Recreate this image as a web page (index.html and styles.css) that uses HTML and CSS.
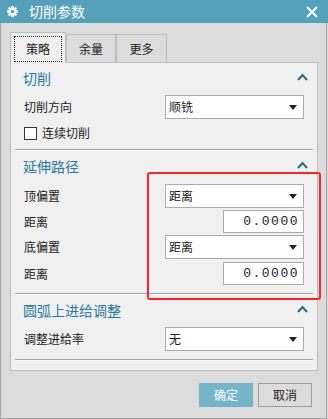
FILE: index.html
```html
<!DOCTYPE html>
<html>
<head>
<meta charset="utf-8">
<link rel="stylesheet" href="styles.css">
</head>
<body>
<div class="dialog">
  <div class="titlebar">
    <svg class="gear" width="11" height="11" viewBox="0 0 12 12">
      <g fill="#fff">
        <circle cx="6" cy="6" r="4"/>
        <rect x="4.6" y="0" width="2.8" height="12" rx="0.4"/>
        <rect x="4.6" y="0" width="2.8" height="12" rx="0.4" transform="rotate(45 6 6)"/>
        <rect x="4.6" y="0" width="2.8" height="12" rx="0.4" transform="rotate(90 6 6)"/>
        <rect x="4.6" y="0" width="2.8" height="12" rx="0.4" transform="rotate(135 6 6)"/>
      </g>
      <circle cx="6" cy="6" r="1.9" fill="#55a1bb"/>
    </svg>
    <span class="title">切削参数</span>
    <svg class="close" width="12" height="12" viewBox="0 0 12 12">
      <path d="M1 1 L11 11 M11 1 L1 11" stroke="#fff" stroke-width="1.8" fill="none"/>
    </svg>
  </div>
  <div class="body">
    <div class="tabs">
      <div class="tab active"><span class="focus">策略</span></div>
      <div class="tab t2">余量</div>
      <div class="tab t3">更多</div>
    </div>
    <div class="panel">
      <div class="section s1">
        <div class="header">
          <span>切削</span>
          <svg class="caret" width="11" height="8" viewBox="0 0 11 8"><path d="M1 7 L5.5 2 L10 7" stroke="#1a6e94" stroke-width="2" fill="none"/></svg>
        </div>
        <div class="row first">
          <span class="label">切削方向</span>
          <div class="select"><span>顺铣</span><svg width="8" height="5" viewBox="0 0 8 5"><path d="M0 0 H8 L4 5 Z" fill="#222"/></svg></div>
        </div>
        <div class="row check">
          <span class="box"></span>
          <span class="clabel">连续切削</span>
        </div>
      </div>
      <div class="section s2">
        <div class="header">
          <span>延伸路径</span>
          <svg class="caret" width="11" height="8" viewBox="0 0 11 8"><path d="M1 7 L5.5 2 L10 7" stroke="#1a6e94" stroke-width="2" fill="none"/></svg>
        </div>
        <div class="row first">
          <span class="label">顶偏置</span>
          <div class="select"><span>距离</span><svg width="8" height="5" viewBox="0 0 8 5"><path d="M0 0 H8 L4 5 Z" fill="#222"/></svg></div>
        </div>
        <div class="row num">
          <span class="label">距离</span>
          <div class="input"><span>0.0000</span></div>
        </div>
        <div class="row">
          <span class="label">底偏置</span>
          <div class="select"><span>距离</span><svg width="8" height="5" viewBox="0 0 8 5"><path d="M0 0 H8 L4 5 Z" fill="#222"/></svg></div>
        </div>
        <div class="row num last">
          <span class="label">距离</span>
          <div class="input"><span>0.0000</span></div>
        </div>
      </div>
      <div class="section s3">
        <div class="header">
          <span>圆弧上进给调整</span>
          <svg class="caret" width="11" height="8" viewBox="0 0 11 8"><path d="M1 7 L5.5 2 L10 7" stroke="#1a6e94" stroke-width="2" fill="none"/></svg>
        </div>
        <div class="row first">
          <span class="label">调整进给率</span>
          <div class="select"><span>无</span><svg width="8" height="5" viewBox="0 0 8 5"><path d="M0 0 H8 L4 5 Z" fill="#222"/></svg></div>
        </div>
      </div>
    </div>
    <div class="buttons">
      <div class="btn ok">确定</div>
      <div class="btn cancel">取消</div>
    </div>
  </div>
  <div class="highlight"></div>
</div>
</body>
</html>
```

FILE: styles.css
```css
* { box-sizing: border-box; }
html, body { margin: 0; padding: 0; }
body {
  width: 328px;
  height: 419px;
  overflow: hidden;
  background: #dcdcdc;
  font-family: "Noto Sans CJK SC", "Noto Sans", sans-serif;
  font-size: 12px;
  color: #1a1a1a;
}
.dialog {
  position: relative;
  width: 328px;
  height: 419px;
  display: flex;
  flex-direction: column;
}
.titlebar {
  height: 23px;
  background: #55a1bb;
  display: flex;
  align-items: center;
  padding-left: 7px;
  padding-right: 10px;
  flex: none;
}
.gear { flex: none; }
.title {
  color: #fff;
  font-size: 14px;
  line-height: 23px;
  margin-left: 11px;
}
.close { margin-left: auto; flex: none; }
.body {
  flex: 1;
  border-left: 1px solid #a4a4a4;
  border-right: 1px solid #a4a4a4;
  border-bottom: 1px solid #a4a4a4;
  padding: 9px 0 0 9px;
  width: 327px;
}
.tabs {
  display: flex;
  height: 30px;
  align-items: flex-start;
}
.tab {
  border: 1px solid #bdbdbd;
  border-bottom: none;
  display: flex;
  align-items: center;
  justify-content: center;
  background: #dcdcdc;
  margin-top: 2px;
  height: 28px;
  line-height: 16px;
}
.tab.active {
  width: 56px;
  height: 31px;
  margin-top: 0;
  background: #f0f0f0;
  position: relative;
  z-index: 1;
  padding: 3px 3px 1px 3px;
}
.focus {
  border: 1px dotted #222;
  width: 100%;
  height: 100%;
  display: flex;
  align-items: center;
  justify-content: center;
  padding-bottom: 1px;
}
.t2 { width: 50px; }
.t3 { width: 51px; }
.panel {
  width: 308px;
  height: 309px;
  border: 1px solid #bdbdbd;
  background: #f0f0f0;
  padding: 0 4px;
}
.section {
  border-bottom: 1px solid #a3a3a3;
  box-shadow: 0 1px 0 #fbfbfb;
  padding: 4px 9px 8px 9px;
}
.s1 { padding-top: 3px; padding-bottom: 6px; }
.header {
  height: 24px;
  display: flex;
  align-items: center;
  color: #1f7aa6;
  font-size: 14px;
  margin-left: -1px;
  margin-right: -4px;
}
.caret { margin-left: auto; margin-top: -2px; }
.row {
  display: flex;
  align-items: center;
  margin-top: 2px;
  line-height: 16px;
}
.row.first { margin-top: 5px; }
.s2 .row.first { margin-top: 6px; }
.row.last { margin-top: 3px; }
.label { flex: 1; }
.select {
  width: 139px;
  height: 24px;
  background: #fff;
  border: 1px solid #ababab;
  display: flex;
  align-items: center;
  padding: 0 6px 0 3px;
}
.select svg { margin-left: auto; }
.input {
  width: 81px;
  height: 23px;
  background: #fff;
  border: 1px solid #ababab;
  display: flex;
  align-items: center;
  justify-content: flex-end;
  padding-right: 4px;
  overflow: hidden;
  font-family: "Liberation Mono", monospace;
  font-size: 13px;
  color: #222;
}
.input span {
  white-space: nowrap;
  letter-spacing: 1.5px;
}
.row.check { margin-top: 4px; height: 20px; }
.box {
  width: 13px;
  height: 13px;
  border: 1px solid #333;
  background: #fff;
  flex: none;
}
.clabel { margin-left: 5px; }
.buttons {
  display: flex;
  justify-content: flex-end;
  gap: 5px;
  margin-top: 12px;
  padding-right: 14px;
}
.btn {
  width: 54px;
  height: 24px;
  display: flex;
  align-items: center;
  justify-content: center;
  line-height: 16px;
}
.ok {
  background: #74b5ca;
  color: #fff;
}
.cancel {
  border: 1px solid #9e9e9e;
  background: #dcdcdc;
}
.highlight {
  position: absolute;
  left: 147px;
  top: 172px;
  width: 174px;
  height: 128px;
  border: 2px solid #ff2424;
  border-radius: 3px;
}
```
